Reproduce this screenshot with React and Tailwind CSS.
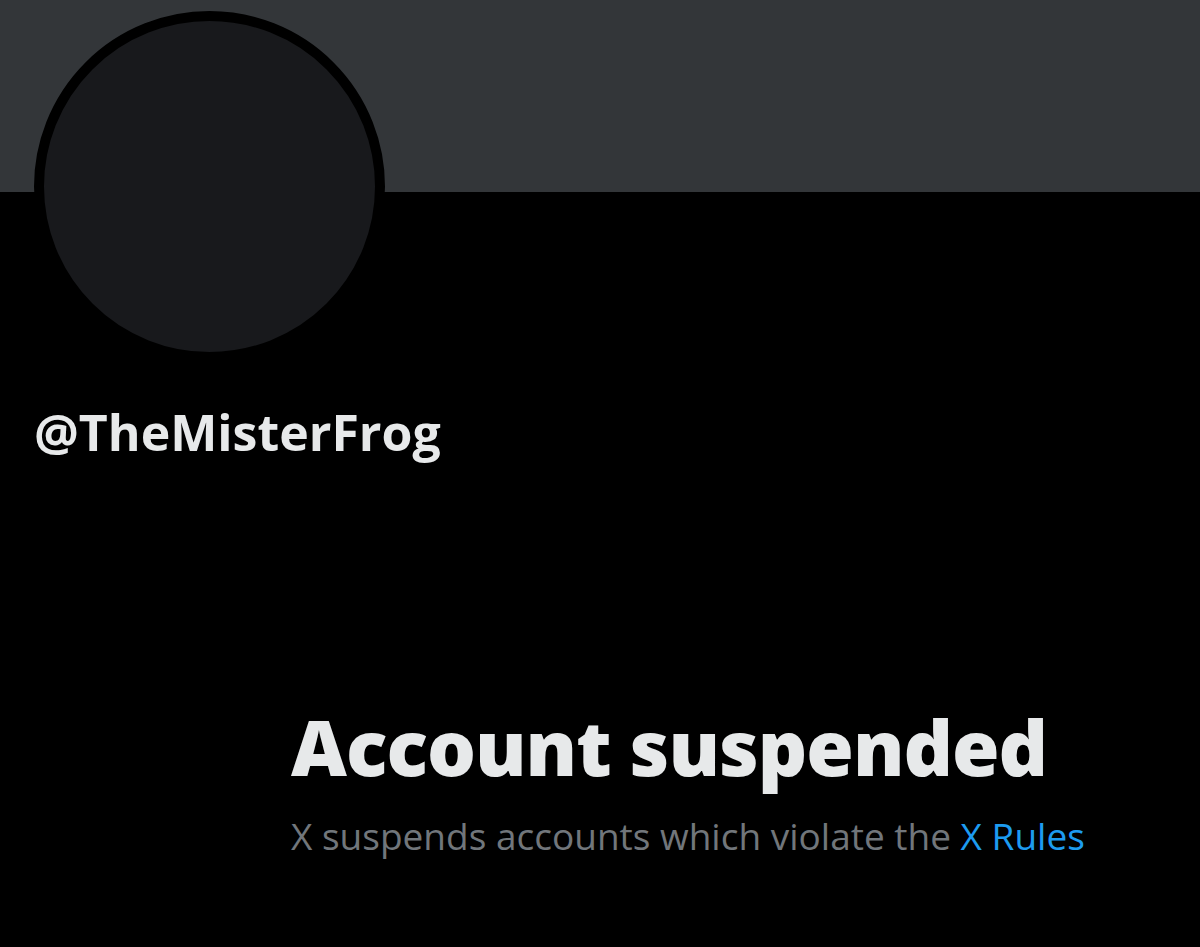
export default function App() {
  return (
    <div className="min-h-[947px] w-full bg-black overflow-hidden" style={{ fontFamily: '"Open Sans", "Liberation Sans", sans-serif' }}>
      <div className="h-[192px] w-full bg-[#333639]" />
      <div className="px-[34px]">
        <div className="-mt-[181px] w-[351px] h-[351px] rounded-full border-[10px] border-black bg-[#18191c]" />
        <div className="mt-[40px] text-[50px] leading-[60px] font-bold text-[#e7e9ea]">@TheMisterFrog</div>
      </div>
      <div className="pl-[291px] pt-[240px]">
        <div className="text-[77px] leading-[90px] font-extrabold text-[#e7e9ea] tracking-[-1px]">Account suspended</div>
        <div className="mt-[22px] text-[37px] leading-[44px] text-[#71767b]">
          X suspends accounts which violate the <a className="text-[#1d9bf0]">X Rules</a>
        </div>
      </div>
    </div>
  )
}
